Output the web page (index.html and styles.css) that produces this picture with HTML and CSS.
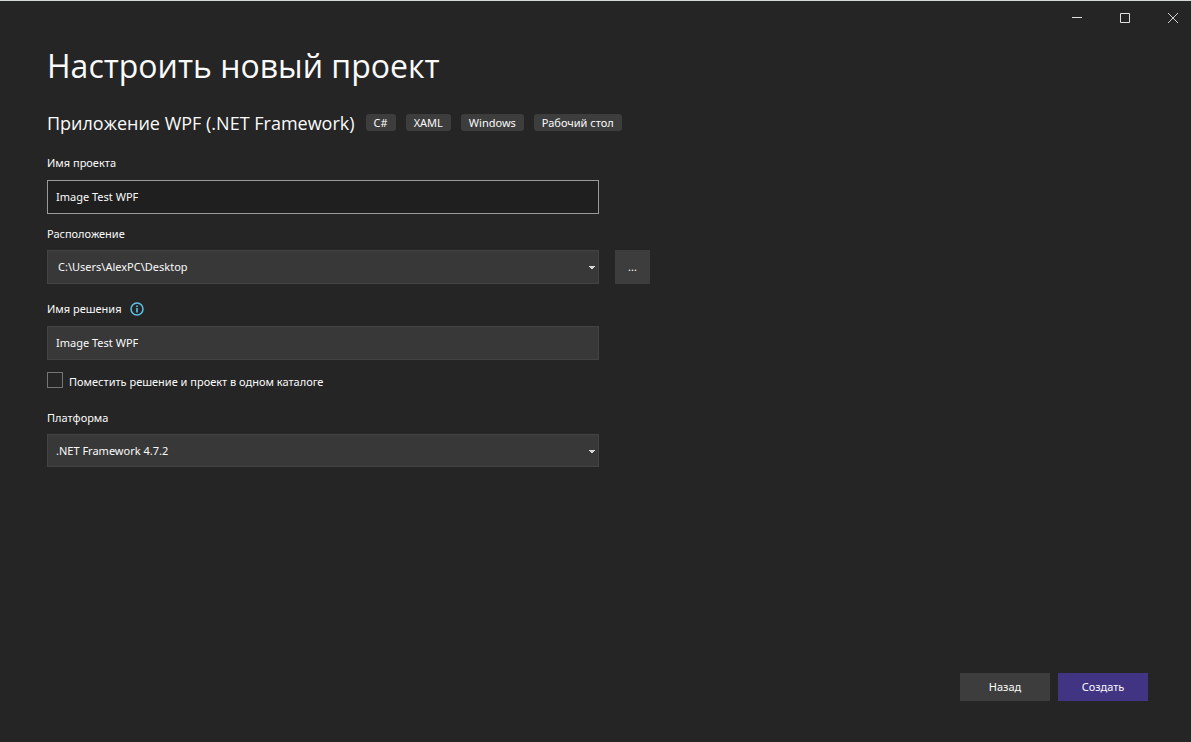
FILE: index.html
```html
<!DOCTYPE html>
<html lang="ru">
<head>
<meta charset="utf-8">
<meta name="viewport" content="width=device-width, initial-scale=1">
<title>Настроить новый проект</title>
<link rel="stylesheet" href="styles.css">
</head>
<body>
<div class="window">
  <header class="titlebar">
    <button class="caption-button" type="button" aria-label="Свернуть">
      <svg width="12" height="12" viewBox="0 0 12 12"><path d="M1 5.5h10" stroke="#e0e0e0" fill="none"/></svg>
    </button>
    <button class="caption-button" type="button" aria-label="Развернуть">
      <svg width="12" height="12" viewBox="0 0 12 12"><path d="M1.5 1.5h9v9h-9z" stroke="#e0e0e0" fill="none"/></svg>
    </button>
    <button class="caption-button" type="button" aria-label="Закрыть">
      <svg width="12" height="12" viewBox="0 0 12 12"><path d="M1 1l10 10M11 1L1 11" stroke="#d0d0d0" fill="none"/></svg>
    </button>
  </header>
  <main class="content">
    <h1 class="title">Настроить новый проект</h1>
    <div class="template">
      <h2 class="template-name">Приложение WPF (.NET Framework)</h2>
      <ul class="tags">
        <li class="tag">C#</li>
        <li class="tag">XAML</li>
        <li class="tag">Windows</li>
        <li class="tag">Рабочий стол</li>
      </ul>
    </div>
    <form class="form" id="project-form">
      <div class="field">
        <label class="label" for="project-name">Имя проекта</label>
        <input class="control control-text control-active" id="project-name" type="text" value="Image Test WPF">
      </div>
      <div class="field field-location">
        <label class="label" for="location">Расположение</label>
        <div class="row">
          <div class="combo">
            <select class="control control-path" id="location"><option>C:\Users\AlexPC\Desktop</option></select>
            <svg class="arrow" width="6" height="3" viewBox="0 0 6 3"><path d="M0 0h6v1H5v1H4v1H2V2H1V1H0z" fill="#d8d8d8"/></svg>
          </div>
          <button class="browse" type="button" aria-label="Обзор">...</button>
        </div>
      </div>
      <div class="field field-solution">
        <div class="label-row">
          <label class="label" for="solution-name">Имя решения</label>
          <svg class="info" width="14" height="14" viewBox="0 0 14 14"><circle cx="7" cy="7" r="6" fill="none" stroke="#5cc3ea" stroke-width="1.5"/><path d="M7 6v4.5M7 3.4v1.5" stroke="#5cc3ea" stroke-width="1.6"/></svg>
        </div>
        <input class="control control-text" id="solution-name" type="text" value="Image Test WPF">
      </div>
      <div class="check-row">
        <input class="check" id="same-folder" type="checkbox">
        <label class="label check-label" for="same-folder">Поместить решение и проект в одном каталоге</label>
      </div>
      <div class="field field-framework">
        <label class="label" for="framework">Платформа</label>
        <div class="combo">
          <select class="control control-short" id="framework"><option>.NET Framework 4.7.2</option></select>
          <svg class="arrow" width="6" height="3" viewBox="0 0 6 3"><path d="M0 0h6v1H5v1H4v1H2V2H1V1H0z" fill="#d8d8d8"/></svg>
        </div>
      </div>
    </form>
  </main>
  <footer class="actions">
    <button class="action" type="button">Назад</button>
    <button class="action action-primary" type="submit" form="project-form">Создать</button>
  </footer>
</div>
</body>
</html>
```
FILE: styles.css
```css
* {
  box-sizing: border-box;
}

body {
  margin: 0;
  background: #252525;
  color: #fafafa;
  font-family: "Segoe UI", "Noto Sans", "Open Sans", sans-serif;
  font-size: 11px;
  line-height: 16px;
}

button,
input,
select {
  margin: 0;
  color: inherit;
  font: inherit;
}

.window {
  display: flex;
  flex-direction: column;
  min-height: 100vh;
  border-top: 1px solid #d5d9d8;
}

.titlebar {
  display: flex;
  justify-content: flex-end;
  gap: 12px;
}

.caption-button {
  display: flex;
  align-items: center;
  justify-content: center;
  width: 36px;
  height: 34px;
  padding: 0;
  border: 0;
  background: none;
}

.content {
  flex: 1;
  padding: 7px 47px 0;
}

.title,
.template-name {
  margin: 0;
  font-family: "Segoe UI", "Open Sans", sans-serif;
  font-weight: 400;
}

.title {
  font-size: 32px;
  line-height: 48px;
}

.template {
  display: flex;
  align-items: center;
  gap: 11px;
  margin-top: 21px;
}

.template-name {
  font-size: 18px;
  line-height: 24px;
}

.tags {
  display: flex;
  gap: 10px;
  margin: 0;
  padding: 0 0 2px;
  list-style: none;
}

.tag {
  padding: 0 8px;
  border-radius: 3px;
  background: #3d3d3d;
  line-height: 17px;
}

.form {
  display: flex;
  flex-direction: column;
  margin-top: 20px;
}

.field {
  display: flex;
  flex-direction: column;
  gap: 9px;
}

.field-location {
  margin-top: 12px;
  gap: 8px;
}

.field-solution {
  margin-top: 17px;
}

.field-framework {
  gap: 8px;
}

.row {
  display: flex;
  gap: 16px;
}

.label-row {
  display: flex;
  align-items: center;
  gap: 8px;
}

.control {
  width: 100%;
  max-width: 552px;
  height: 34px;
  padding: 0 8px;
  border: 1px solid #434343;
  border-radius: 0;
  outline: 0;
  appearance: none;
  background: #383838;
}

.control-text {
  padding-bottom: 2px;
}

.control-active {
  border-color: #9a9a9a;
  background: #1f1f1f;
}

.control-path {
  padding-left: 10px;
}

.control-short {
  height: 33px;
}

.combo {
  position: relative;
  width: 100%;
  max-width: 552px;
}

.combo .control {
  display: block;
}

.arrow {
  position: absolute;
  top: 16px;
  right: 4px;
  pointer-events: none;
}

.browse {
  width: 35px;
  padding: 0;
  border: 0;
  background: #3d3d3d;
}

.check-row {
  display: flex;
  align-items: flex-start;
  gap: 6px;
  margin: 12px 0 20px;
}

.check {
  width: 16px;
  height: 16px;
  border: 1px solid #767676;
  appearance: none;
  background: #252525;
}

.check:checked {
  background: #9184ee;
}

.check-label {
  padding-top: 2px;
}

.actions {
  display: flex;
  justify-content: flex-end;
  gap: 8px;
  padding: 0 43px 41px;
}

.action {
  width: 90px;
  height: 28px;
  padding: 0;
  border: 0;
  background: #3d3d3d;
}

.action-primary {
  background: #413482;
}
```
